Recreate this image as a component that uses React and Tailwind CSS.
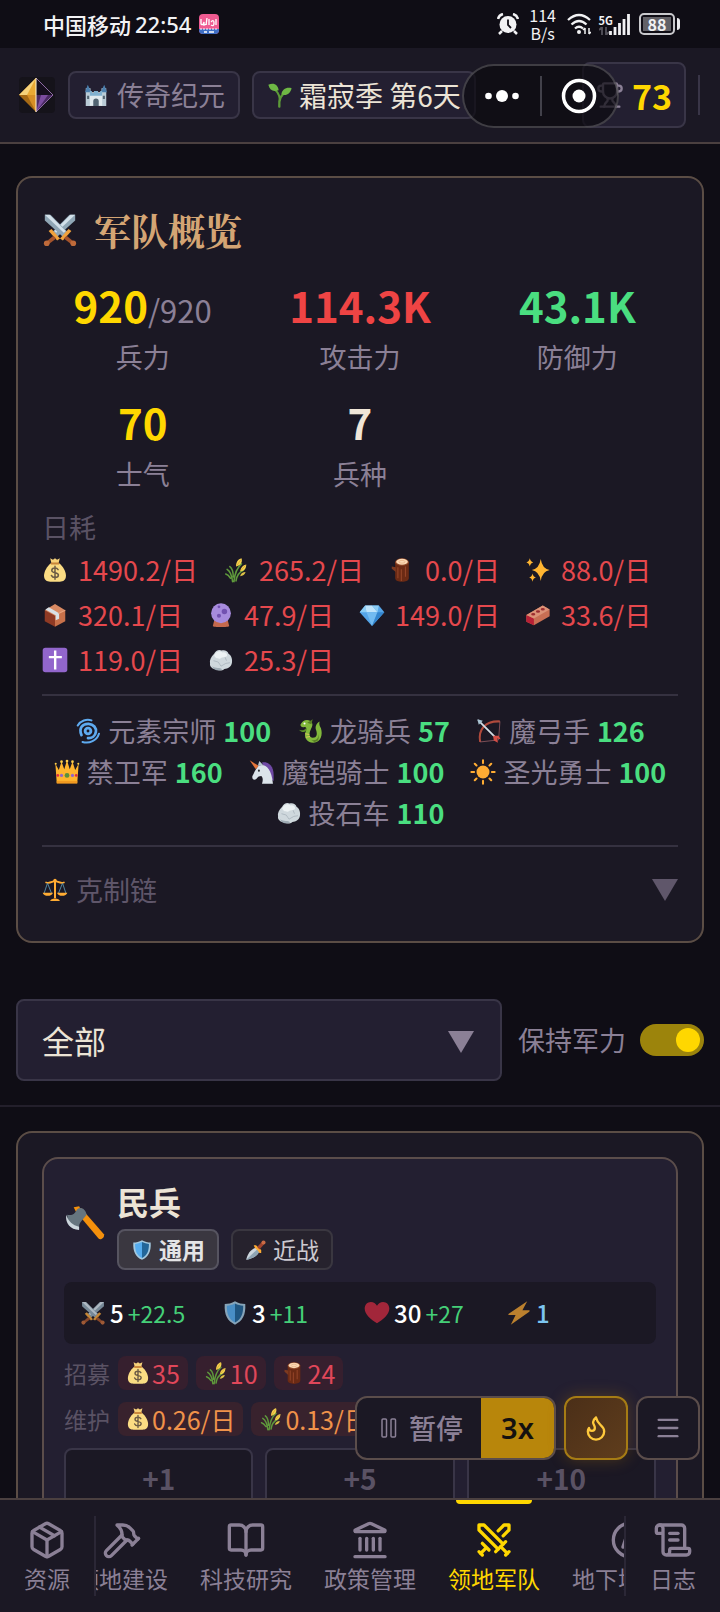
import { useLayoutEffect, useRef } from "react";
import {
  Package, Hammer, BookOpen, Landmark, Swords, Compass, ScrollText,
  Trophy, Flame, Menu,
} from "lucide-react";

const sword = (
  <g>
    <path d="M2 2h6l18 18-5 5L2 8z" fill="#8fa6b5" />
    <path d="M2 2h5l17 17-2 2z" fill="#d3e1ea" />
    <path d="M18 27l9-10 3 2-9 10z" fill="#f0a23c" />
    <path d="M25 24l7 6-2 3-8-6z" fill="#a3532c" />
    <circle cx="32" cy="32" r="3" fill="#bf6a3a" />
  </g>
);

const ART = {
  castle: (
    <g>
      <path d="M3 8h7v26H3zM26 8h7v26h-7z" fill="#b9cbd6" />
      <path d="M9 14h18v20H9z" fill="#dfe9ee" />
      <path d="M2 14L6 3l5 11zM25 14l5-11 4 11z" fill="#4b7fae" />
      <path d="M9 12h3v3h3v-3h6v3h3v-3h3v7H9z" fill="#7fb0cf" />
      <path d="M14 34v-7a4 4 0 0 1 8 0v7z" fill="#526472" />
      <path d="M5 19h3v5H5zM28 19h3v5h-3z" fill="#526472" />
    </g>
  ),
  seedling: (
    <g>
      <path d="M17 35C16 24 19 17 27 14" fill="none" stroke="#5c9a38" strokeWidth="3.5" strokeLinecap="round" />
      <path d="M18 25C17 16 13 11 7 8" fill="none" stroke="#5c9a38" strokeWidth="3" />
      <path d="M1 3c8-4 14 0 15 8C8 14 3 11 1 3z" fill="#6fb845" />
      <path d="M35 8c-8-2-14 2-15 9 7 3 13-1 15-9z" fill="#6fb845" />
    </g>
  ),
  swords: (
    <g>
      <g transform="translate(36 0) scale(-1 1)">{sword}</g>
      {sword}
    </g>
  ),
  money: (
    <g>
      <path d="M11 1l4 2 3-2 3 2 4-2-2 8H13z" fill="#f7d27a" />
      <path d="M12 8h12c6 5 10 12 10 18 0 7-4 9-9 9H11c-5 0-9-2-9-9 0-6 4-13 10-18z" fill="#fbdc83" />
      <path d="M12 7h12v3H12z" fill="#c9863a" />
      <path d="M22.500 17.500c-1-1.800-3-2.300-4.700-2.300-2.500 0-4.500 1.300-4.500 3.400 0 4.600 9.700 2.300 9.700 6.700 0 2.300-2.300 3.600-5 3.600-2.300 0-4.400-.8-5.300-3M18 12.500v19" fill="none" stroke="#6d5c45" strokeWidth="2.200" strokeLinecap="round" />
    </g>
  ),
  wheat: (
    <g>
      <path d="M15 35C16 24 20 14 26 9M13 35C12 26 10 20 5 17M18 34c1-8 5-13 11-16M10 30c-2-3-4-5-7-6M14 28c0-6-1-12-5-15" fill="none" stroke="#5f9a3c" strokeWidth="2.300" strokeLinecap="round" />
      <path d="M18 13c0-6 3-11 8-12 2 5-1 11-8 12zM24 20c1-6 4-9 9-10 0 6-3 10-9 10z" fill="#f6d24f" />
      <path d="M24 27c1-4 4-6 8-6-1 4-4 6-8 6z" fill="#dcc246" />
      <path d="M19 12l6-9M25 19l7-8" stroke="#cf9f2c" />
    </g>
  ),
  wood: (
    <g>
      <path d="M8 6h20v24c0 7-20 7-20 0z" fill="#6b2a14" />
      <path d="M3 13l6 1v7L3 16z" fill="#7d3a20" />
      <path d="M12 14v16M17 17v17M23 13v15" stroke="#97472a" strokeWidth="1.500" />
      <ellipse cx="18" cy="6.500" rx="10" ry="5.500" fill="#8c4526" />
      <ellipse cx="18" cy="6" rx="8.500" ry="4.300" fill="#fbd9b5" />
      <ellipse cx="18" cy="6" rx="4.500" ry="2" fill="none" stroke="#e4ad80" />
    </g>
  ),
  sparkles: (
    <path d="M22 2q2 14 13 16-11 2-13 16-2-14-13-16 11-2 13-16zM6 1q1 5 5 6-4 1-5 6-1-5-5-6 4-1 5-6zM10 23q1 5 5 6-4 1-5 6-1-5-5-6 4-1 5-6z" fill="#ffb531" />
  ),
  box: (
    <g>
      <path d="M3 11l15 7v17L3 27z" fill="#8f3a24" />
      <path d="M33 11l-15 7v17l15-8z" fill="#c8714a" />
      <path d="M18 2l15 9-15 8L3 11z" fill="#d98a63" />
      <path d="M9 6.500l15 9v8l-5 2v-7L4 10z" fill="#d8e0e6" />
      <path d="M23 16l10-5" stroke="#eba57f" strokeWidth="1.500" />
    </g>
  ),
  crystal: (
    <g>
      <path d="M8 26h20l2 8c0 2-24 2-24 0z" fill="#c4694d" />
      <circle cx="18" cy="15.500" r="14.500" fill="#a78bdd" />
      <circle cx="23" cy="13" r="4" fill="#7251b0" />
      <circle cx="15" cy="19" r="3" fill="#7251b0" />
      <circle cx="15" cy="6" r="2" fill="#7251b0" />
    </g>
  ),
  gem: (
    <g>
      <path d="M8 4h20l8 10-18 20L0 14z" fill="#55a5e8" />
      <path d="M8 4l2 10H0z" fill="#8ccdf5" />
      <path d="M8 4h10l-8 10zM18 4l8 10H10z" fill="#bfe4fb" />
      <path d="M18 4h10l-2 10z" fill="#8ccdf5" />
      <path d="M10 14h16l-8 20z" fill="#72bbf1" />
      <path d="M26 14h10L18 34z" fill="#3385ce" />
    </g>
  ),
  brick: (
    <g>
      <path d="M1 18L25 4l10 6v10L12 33 1 28z" fill="#c96f54" />
      <path d="M1 18l11 5v10L1 28z" fill="#b81f35" />
      <path d="M1 18L25 4l10 6-23 13z" fill="#dd9277" />
      <ellipse cx="11" cy="17" rx="3" ry="1.800" fill="#9b2d30" />
      <ellipse cx="18" cy="13" rx="3" ry="1.800" fill="#9b2d30" />
      <ellipse cx="25" cy="9.500" rx="3" ry="1.800" fill="#9b2d30" />
    </g>
  ),
  cross: (
    <g>
      <rect width="36" height="36" rx="4" fill="#9266cc" />
      <path d="M16.500 4h3.500v8h8v3.500h-8V32h-3.500V15.500H9V12h7.500z" fill="#fff" />
    </g>
  ),
  rock: (
    <g>
      <path d="M8 9c2-5 7-7 11-5 5-1 9 1 10 5 4 2 6 8 5 13-1 6-6 9-11 9-3 3-9 3-12 1-6-1-10-5-9-9-1-4 1-9 6-14z" fill="#cfd8dd" />
      <path d="M8 11c3-6 9-7 12-4 5-1 7 2 7 5-4 3-8 1-10 4-4 0-7 0-9-5z" fill="#edf2f4" />
      <path d="M7 19l7 2 4 6 7-4 6-1M24 14l2 5" fill="none" stroke="#a9b5bd" strokeWidth="1.200" />
      <path d="M5 27c5 4 12 1 15 5-5 2-12 2-15-5z" fill="#9eabb4" />
    </g>
  ),
  cyclone: (
    <g fill="none" stroke="#5eaaf0" strokeWidth="4.200" strokeLinecap="round">
      <circle cx="18" cy="18" r="4.200" />
      <path d="M8.500 24C4 14 10 7 19 7.500c7 .5 11.500 6 10.500 12-1 6-6 9.500-11.500 9" strokeWidth="4" />
      <path d="M3 10C7 3 16 0 23 2.500M34 22c-3 10-14 15-24 12" strokeWidth="3" />
    </g>
  ),
  dragon: (
    <g>
      <path d="M4 9C6 3 13 0 18 3c6 4 3 9 1 13-3 6-2 11 3 12 6 0 7-5 5-11-2-5 0-10 5-13-1 4 0 6 2 10 3 9 0 21-11 21-10 0-15-8-11-17 1-4 1-6-2-6-3 1-6 0-6-3z" fill="#82b93c" />
      <path d="M2 16c4 2 8 1 10-2l1 3c-3 4-8 3-11-1z" fill="#5c8f28" />
      <path d="M14 6l8-5-2 7zM20 31c8 2 11-3 10-9 2 7 0 12-6 12z" fill="#587f26" />
      <circle cx="10" cy="7" r="1.500" fill="#fff" />
      <path d="M11 22l6 1M12 27l6-1" stroke="#d8c55a" strokeWidth="1.500" />
    </g>
  ),
  bow: (
    <g fill="none">
      <path d="M5 34C2 16 12 3 34 4" stroke="#b04a3c" strokeWidth="3" />
      <path d="M5 34L32 31L34 4" stroke="#a8666c" strokeWidth="1" />
      <path d="M2 2l25 25" stroke="#d3dfe6" strokeWidth="2.600" />
      <path d="M1 1l8 2-6 6z" fill="#a9c3d2" />
      <path d="M24 25l8 0 3 5-5-1 1 6-6-3z" fill="#d44d45" />
    </g>
  ),
  crown: (
    <g>
      <path d="M1 6l5 9 4-12 4 11 4-13 4 13 4-11 4 12 5-9-2 28H3z" fill="#ffb52e" />
      <circle cx="1.500" cy="6" r="1.500" fill="#ffcf4a" /><circle cx="10" cy="3" r="2" fill="#ffcf4a" />
      <circle cx="18" cy="2" r="2" fill="#ffcf4a" /><circle cx="26" cy="3" r="2" fill="#ffcf4a" />
      <circle cx="34.500" cy="6" r="1.500" fill="#ffcf4a" />
      <path d="M3 31h30v4H3z" fill="#f19a20" />
      <circle cx="18" cy="23" r="3.500" fill="#5c913b" />
      <circle cx="10" cy="23" r="2.300" fill="#9266cc" /><circle cx="26" cy="23" r="2.300" fill="#9266cc" />
      <circle cx="4.500" cy="23" r="2" fill="#dd2e44" /><circle cx="31.500" cy="23" r="2" fill="#dd2e44" />
    </g>
  ),
  unicorn: (
    <g>
      <path d="M18 4c9-2 17 5 17 18v9l-9-8z" fill="#6f49a5" />
      <path d="M13 9c8-4 19 2 21 26H18c2-6 1-9-1-11-3 0-5 1-7 4-4 3-7 0-6-4 2-3 3-8 9-15z" fill="#dbe3ea" />
      <path d="M0 1l13 8-4 5z" fill="#e5763b" />
      <path d="M12 9l2-7 6 6z" fill="#b9c7d2" />
      <circle cx="13.500" cy="16" r="1.500" fill="#292f33" />
    </g>
  ),
  sun: (
    <g>
      <circle cx="18" cy="18" r="9.500" fill="#ffac33" />
      <path d="M18 1v4M18 31v4M1 18h4M31 18h4M6 6l2.500 2.500M27.500 27.500L30 30M6 30l2.500-2.500M27.500 8.500L30 6" stroke="#ffac33" strokeWidth="3" strokeLinecap="round" />
    </g>
  ),
  scales: (
    <g>
      <path d="M5 7c6 2 9-2 13-2s7 4 13 2" fill="none" stroke="#ffac33" strokeWidth="2.500" strokeLinecap="round" />
      <path d="M16.500 3h3v27h-3z" fill="#ffac33" />
      <circle cx="18" cy="4" r="2.500" fill="#ffac33" />
      <path d="M11 34c0-5 14-5 14 0z" fill="#ffac33" />
      <path d="M7 8L2 23M7 8l6 15M29 8l-6 15M29 8l5 15" stroke="#5f9dbb" strokeWidth="1.200" />
      <path d="M0 22h15c-1 6-14 6-15 0zM21 22h15c-1 6-14 6-15 0z" fill="#ffac33" />
    </g>
  ),
  axe: (
    <g>
      <path d="M10 6l5-3 21 24c1 3-3 6-5 4z" fill="#f4900c" />
      <path d="M8 2l5-1 2 4-4 3z" fill="#f4900c" />
      <path d="M2 9c5 1 7-1 9-5 4-3 8 0 9 5l-5 6c-2 2-2 4-2 7C6 21 2 16 2 9z" fill="#66757f" />
      <path d="M1 9c2 6 6 10 12 11v3C5 23 0 17 1 9z" fill="#ccd6dd" />
    </g>
  ),
  shield: (
    <g>
      <path d="M18 1c5 3 10 4 15 4 1 16-4 25-15 30C7 30 2 21 3 5c5 0 10-1 15-4z" fill="#a3c8de" />
      <path d="M18 4c-4 2-8 3-12 3.500C6 20 9 27 18 32z" fill="#55acee" />
      <path d="M18 4c4 2 8 3 12 3.500C30 20 27 27 18 32z" fill="#226699" />
    </g>
  ),
  dagger: (
    <g>
      <path d="M17 14l7 6C20 29 11 33 1 35c2-9 6-17 16-21z" fill="#ccd6dd" />
      <path d="M20 17L1 35c10-2 18-5 23-15z" fill="#8ea4b3" />
      <path d="M14 10l4 0 9 8 0 5-3 0-3-4-5-5z" fill="#ffac33" />
      <path d="M20 13l8-9 4 4-8 9z" fill="#a0442e" />
      <circle cx="31" cy="5" r="3.500" fill="#c96b45" />
    </g>
  ),
  heart: (
    <path d="M36 11.500C36 6 32 2 27 2c-4 0-7 2-9 5.500C16 4 13 2 9 2 4 2 0 6 0 11.500 0 20 9 28 18 33c9-5 18-13 18-21.500z" fill="#c42a40" />
  ),
  bolt: <path d="M30 1L3 19c-1 1-1 2 1 2h9L6 35l27-19c1-1 1-2-1-2h-9z" fill="#e39b31" />,
};

function Emoji({ name, className = "size-[26px]" }) {
  return (
    <svg viewBox="-1 -1 38 38" aria-hidden="true" className={"shrink-0 " + className}>
      {ART[name]}
    </svg>
  );
}

const Triangle = ({ className = "" }) => (
  <svg viewBox="0 0 26 22" aria-hidden="true" className={"h-[22px] w-[26px] shrink-0 " + className}>
    <path d="M0 0h26L13 22z" fill="currentColor" />
  </svg>
);

const STATS = [
  { value: "920", extra: "/920", label: "兵力", color: "text-[#ffd700]" },
  { value: "114.3K", label: "攻击力", color: "text-[#ef4444]" },
  { value: "43.1K", label: "防御力", color: "text-[#4ade80]" },
  { value: "70", label: "士气", color: "text-[#ffd700]" },
  { value: "7", label: "兵种", color: "text-[#f0e6d8]" },
];

const COSTS = [
  ["money", "1490.2/日"], ["wheat", "265.2/日"], ["wood", "0.0/日"], ["sparkles", "88.0/日"],
  ["box", "320.1/日"], ["crystal", "47.9/日"], ["gem", "149.0/日"], ["brick", "33.6/日"],
  ["cross", "119.0/日"], ["rock", "25.3/日"],
];

const UNITS = [
  ["cyclone", "元素宗师", 100], ["dragon", "龙骑兵", 57], ["bow", "魔弓手", 126],
  ["crown", "禁卫军", 160], ["unicorn", "魔铠骑士", 100], ["sun", "圣光勇士", 100],
  ["rock", "投石车", 110],
];

const UNIT_STATS = [
  ["swords", "5", "+22.5"], ["shield", "3", "+11"], ["heart", "30", "+27"], ["bolt", "1", null],
];

const TABS = [
  [Hammer, "领地建设"], [BookOpen, "科技研究"], [Landmark, "政策管理"], [Swords, "领地军队"], [Compass, "地下城探险"],
];

function StatusBar() {
  return (
    <div className="flex h-12 shrink-0 items-center justify-between bg-[#0f0d15] pl-[43px] pr-10 text-[#f2f2f4]">
      <div className="flex items-center gap-1 text-[22px] font-medium">
        <span>中国移动</span>
        <span className="font-['Noto_Sans','Noto_Sans_CJK_SC',sans-serif]">22:54</span>
        <svg viewBox="0 0 20 20" className="ml-1 size-5" aria-hidden="true">
          <rect width="20" height="20" rx="4" fill="#ef5b91" />
          <path d="M0 15h20v1a4 4 0 0 1-4 4H4a4 4 0 0 1-4-4z" fill="#3f6fc4" />
          <path d="M2 5v5q2 2 3-2v3l3-1M8 4l-1 7M10 5v6M12 8q3-3 3 1t-3 2M17 5v6M5 18h3M10 18h5" fill="none" stroke="#fff" strokeWidth="1.300" />
          <path d="M1 15h18" stroke="#fff" strokeDasharray="2 1" />
        </svg>
      </div>
      <div className="flex items-center gap-2">
        <svg viewBox="0 0 22 22" className="size-[22px]" aria-hidden="true">
          <circle cx="11" cy="11.500" r="8.500" fill="#f2f2f4" />
          <path d="M1 6q1-4 5-5M21 6q-1-4-5-5M5 18l-3 3M17 18l3 3" stroke="#f2f2f4" strokeWidth="2.500" fill="none" />
          <path d="M11 6.500v5.500l3 3" stroke="#0f0d15" strokeWidth="1.800" fill="none" />
        </svg>
        <div className="w-8 text-center text-[16px] leading-[18px]">114<br />B/s</div>
        <svg viewBox="0 0 24 22" className="h-[22px] w-6" aria-hidden="true">
          <path d="M1 7Q12-3 23 7M4.500 11.500Q12 4.500 19.500 11.500M8 15.500q4-3.500 8 0" fill="none" stroke="#f2f2f4" strokeWidth="2.300" />
          <circle cx="12" cy="19" r="2" fill="#f2f2f4" />
          <path d="M18 15v6M18 15l-2 2M22 21v-6M22 21l2-2" stroke="#f2f2f4" strokeWidth="1.500" />
        </svg>
        <div className="flex items-end">
          <div className="flex flex-col text-[11px] font-bold leading-[13px]">
            5G
            <svg viewBox="0 0 10 8" className="h-2 w-[10px]" aria-hidden="true">
              <path d="M3 8V0L0 3M7 0v8l3-3" stroke="#55535c" strokeWidth="1.800" fill="none" />
            </svg>
          </div>
          <svg viewBox="0 0 22 21" className="-ml-1 h-[21px] w-[22px]" aria-hidden="true">
            <path d="M1.500 21v-4M6 21v-8M10.500 21V9M15 21V5M19.500 21V0" stroke="#f2f2f4" strokeWidth="2.800" />
          </svg>
        </div>
        <div className="flex items-center gap-[2px]">
          <div className="flex h-[22px] w-9 items-center justify-center rounded-[5px] border-2 border-[#c9c9cd] p-[2px]">
            <span className="w-full bg-[#626167] text-center text-[16px] font-bold leading-[14px]">88</span>
          </div>
          <span className="h-3 w-[3px] rounded-r bg-[#e9e9ec]" />
        </div>
      </div>
    </div>
  );
}

function Header() {
  return (
    <header className="relative flex h-24 shrink-0 items-center justify-between gap-3 overflow-hidden border-b-2 border-[#4b4040] bg-[#1b1824] pl-[18px] pr-5">
      <div className="flex items-center gap-3">
        <svg viewBox="0 0 38 38" className="size-[38px] shrink-0" aria-hidden="true">
          <rect x="1" y="1" width="36" height="36" rx="4" fill="#15131a" />
          <path d="M18 2v17H1z" fill="#e9a933" /><path d="M18 2L9 19H1z" fill="#f6d27a" />
          <path d="M1 19h17v17z" fill="#a66a15" /><path d="M9 19h9v17z" fill="#d78f25" />
          <path d="M18 2l17 17H18z" fill="#160f1e" /><path d="M18 36l17-17H18z" fill="#4a2a63" />
          <path d="M18 36l5-17h7z" fill="#7c4da0" />
          <path d="M18 2l17 17-17 17" fill="none" stroke="#8d6aa3" /><path d="M18 2v34" stroke="#fff3cf" />
        </svg>
        <div className="flex h-12 shrink-0 items-center gap-2 rounded-lg border-2 border-[#393547] bg-[#231f31] px-[13px] text-[27px] text-[#8b8096]">
          <Emoji name="castle" />
          <span>传奇纪元</span>
        </div>
        <div className="flex h-12 shrink-0 items-center gap-[6px] rounded-lg border-2 border-[#393547] bg-[#231f31] px-[13px] text-[28px] text-[#ece4d6]">
          <Emoji name="seedling" />
          <span className="whitespace-nowrap">霜寂季 第6天</span>
        </div>
      </div>
      <div className="flex shrink-0 items-center gap-3">
        <div className="flex h-[66px] items-center gap-2 rounded-lg border-2 border-[#393547] bg-[#231f31] px-3 text-[34px] font-bold text-[#ffd700]">
          <Trophy className="size-7 text-[#8b8096]" strokeWidth={2} />
          <span>73</span>
        </div>
        <span className="h-10 w-[2px] bg-[#393547]" />
      </div>
      <div className="absolute right-[101px] top-4 flex h-16 w-[157px] items-center rounded-full border-2 border-white/20 bg-[#0b0a10]/70">
        <button type="button" aria-label="更多" className="flex flex-1 items-center justify-center">
          <svg viewBox="0 0 34 12" className="h-3 w-[34px]" aria-hidden="true">
            <g fill="#fff"><circle cx="3.500" cy="6" r="3.300" /><circle cx="17" cy="6" r="6" /><circle cx="30.500" cy="6" r="3.300" /></g>
          </svg>
        </button>
        <span className="h-10 w-[2px] bg-[#42414a]" />
        <button type="button" aria-label="关闭" className="flex flex-1 items-center justify-center">
          <svg viewBox="0 0 36 36" className="size-9" aria-hidden="true">
            <circle cx="18" cy="18" r="15.500" fill="none" stroke="#fff" strokeWidth="3.500" />
            <circle cx="18" cy="18" r="6.500" fill="#fff" />
          </svg>
        </button>
      </div>
    </header>
  );
}

function Overview() {
  return (
    <section className="mx-4 rounded-2xl border-2 border-[#5b4d45] bg-[#1b1824] p-6">
      <h2 className="flex items-center gap-4 font-['Noto_Serif_CJK_SC','Noto_Serif_SC','Source_Han_Serif_SC','Noto_Sans_CJK_SC',serif] text-[37px] font-bold leading-[56px] text-[#d4a574]">
        <Emoji name="swords" className="size-[36px]" />
        军队概览
      </h2>
      <div className="mt-4 grid grid-cols-3 gap-x-4 gap-y-[14px] text-center">
        {STATS.map((s) => (
          <div key={s.label}>
            <div className={"flex items-baseline justify-center text-[42px] font-bold leading-[62px] " + s.color}>
              {s.value}
              {s.extra && <span className="text-[31px] font-normal leading-none text-[#8b8096]">{s.extra}</span>}
            </div>
            <div className="text-[27px] leading-[41px] text-[#8b8096]">{s.label}</div>
          </div>
        ))}
      </div>
      <div className="mt-3 text-[27px] leading-[41px] text-[#5a5264]">日耗</div>
      <ul className="flex flex-wrap gap-x-[25px] text-[27px] leading-[45px] text-[#e5484d]">
        {COSTS.map(([icon, text]) => (
          <li key={text} className="flex items-center gap-[10px]">
            <Emoji name={icon} />
            {text}
          </li>
        ))}
      </ul>
      <ul className="mt-3 flex flex-wrap justify-center gap-x-[26px] border-y-2 border-[#353140] pb-3 pt-[14px] text-[27px] leading-[41px] text-[#8b8096]">
        {UNITS.map(([icon, name, count]) => (
          <li key={name} className="flex items-center gap-[7px]">
            <Emoji name={icon} />
            <span>{name}</span>
            <span className="font-bold text-[#4ade80]">{count}</span>
          </li>
        ))}
      </ul>
      <button type="button" className="mt-4 flex w-full items-center justify-between text-[27px] leading-[54px] text-[#5f566a]">
        <span className="flex items-center gap-2">
          <Emoji name="scales" />
          克制链
        </span>
        <Triangle />
      </button>
    </section>
  );
}

function Filters() {
  return (
    <div className="mt-14 flex items-center gap-4 border-b-2 border-[#231f2b] px-4 pb-6">
      <div className="relative min-w-0 flex-1">
        <select aria-label="兵种筛选" className="block h-[82px] w-full appearance-none rounded-lg border-2 border-[#393547] bg-[#231f31] px-6 text-[32px] text-[#ece4d6]">
          <option>全部</option>
        </select>
        <Triangle className="pointer-events-none absolute right-7 top-8 text-[#8b8096]" />
      </div>
      <label className="flex items-center gap-[14px] text-[27px] text-[#8b8096]">
        保持军力
        <input
          type="checkbox"
          role="switch"
          defaultChecked
          className="flex h-8 w-16 appearance-none items-center justify-end rounded-full bg-[#9c840c] px-1 before:size-6 before:rounded-full before:bg-[#ffd700] before:content-['']"
        />
      </label>
    </div>
  );
}

function Chips({ label, items, color }) {
  return (
    <div className="mt-3 flex items-center gap-2 text-[23px] leading-[34px] text-[#5a5264]">
      <span className="shrink-0">{label}</span>
      {items.map(([icon, text]) => (
        <span key={icon} className={"flex shrink-0 items-center gap-[2px] rounded-lg px-2 text-[25px] " + color}>
          <Emoji name={icon} className="size-6" />
          {text}
        </span>
      ))}
    </div>
  );
}

function UnitCard() {
  return (
    <section className="mx-4 mt-6 rounded-2xl border-2 border-[#5b4d45] bg-[#1b1824] p-6">
      <article className="rounded-2xl border-2 border-[#5b4d4b] bg-[#231f31] p-5">
        <div className="flex items-center gap-3">
          <Emoji name="axe" className="size-[41px]" />
          <div>
            <h3 className="text-[32px] font-bold leading-[44px] text-[#ece4d6]">民兵</h3>
            <div className="mt-[6px] flex gap-3 text-[23px]">
              <span className="flex h-[41px] items-center gap-[6px] rounded-lg border-2 border-[#565460] bg-[#3a3740] px-3 font-bold text-[#e4e4e6]">
                <Emoji name="shield" className="size-[22px]" />通用
              </span>
              <span className="flex h-[41px] items-center gap-[6px] rounded-lg border-2 border-[#3a3740] bg-[#26222d] px-3 text-[#ccc9d0]">
                <Emoji name="dagger" className="size-[22px]" />近战
              </span>
            </div>
          </div>
        </div>
        <div className="mt-3 grid h-[62px] grid-cols-4 items-center gap-2 rounded-lg bg-[#1b1824] px-4">
          {UNIT_STATS.map(([icon, value, bonus]) => (
            <div key={icon} className="flex items-center gap-1 whitespace-nowrap text-[24px]">
              <Emoji name={icon} className="size-[26px] opacity-80" />
              <span className={bonus ? "font-medium text-white" : "font-medium text-[#7cc4f0]"}>{value}</span>
              {bonus && <span className="text-[23px] text-[#45cf78]">{bonus}</span>}
            </div>
          ))}
        </div>
        <Chips label="招募" color="bg-[#361f2e] text-[#e0475a]" items={[["money", "35"], ["wheat", "10"], ["wood", "24"]]} />
        <Chips label="维护" color="bg-[#38222d] text-[#f0924a]" items={[["money", "0.26/日"], ["wheat", "0.13/日"]]} />
        <div className="mt-3 grid grid-cols-3 gap-3">
          {["+1", "+5", "+10"].map((t) => (
            <button key={t} type="button" className="h-[60px] rounded-lg border-2 border-[#393547] bg-[#1b1824] text-[28px] font-bold text-[#5a5264]">
              {t}
            </button>
          ))}
        </div>
      </article>
    </section>
  );
}

function FloatingControls() {
  return (
    <div className="absolute bottom-[38px] right-5 flex h-16 gap-2">
      <div className="flex overflow-hidden rounded-xl border-2 border-[#5b4d4b] bg-[#1b1824]">
        <button type="button" className="flex items-center gap-3 pl-6 pr-[18px] text-[27px] font-medium text-[#8b8096]">
          <svg viewBox="0 0 16 20" className="h-5 w-4" aria-hidden="true">
            <g fill="none" stroke="currentColor" strokeWidth="1.500"><rect x="1" y="1" width="4.500" height="18" rx="1" /><rect x="10" y="1" width="4.500" height="18" rx="1" /></g>
          </svg>
          暂停
        </button>
        <button type="button" className="w-[73px] bg-[#b8860b] font-['Noto_Sans','Noto_Sans_CJK_SC',sans-serif] text-[29px] font-semibold text-[#14110f]">3x</button>
      </div>
      <button type="button" aria-label="加速" className="flex size-16 items-center justify-center rounded-xl border-2 border-[#a67c14] bg-linear-to-br from-[#4b2f18] to-[#5f3d1c] text-[#ffc93c] shadow-[0_0_16px_rgba(184,120,11,0.3)]">
        <Flame className="size-7" />
      </button>
      <button type="button" aria-label="菜单" className="flex size-16 items-center justify-center rounded-xl border-2 border-[#5b4d4b] bg-[#1b1824] text-[#8b8096]">
        <Menu className="size-7" />
      </button>
    </div>
  );
}

function TabButton({ icon: Icon, label, active, className = "" }) {
  return (
    <button
      type="button"
      className={"relative flex shrink-0 flex-col items-center whitespace-nowrap pt-5 " + (active ? "text-[#ffd700] " : "text-[#8b8096] ") + className}
    >
      {active && <span className="absolute top-0 h-1 w-[76px] rounded-b bg-[#ffd700]" />}
      <Icon className="size-10" strokeWidth={2} />
      <span className="text-[23px] leading-[36px]">{label}</span>
    </button>
  );
}

function BottomNav() {
  const strip = useRef(null);
  useLayoutEffect(() => {
    strip.current.scrollLeft = 36;
  }, []);
  return (
    <nav className="flex h-[114px] shrink-0 border-t-2 border-[#4b4040] bg-[#1b1824]">
      <TabButton icon={Package} label="资源" className="w-[94px]" />
      <span className="my-4 w-[2px] bg-[#2b2736]" />
      <div ref={strip} className="flex min-w-0 flex-1 overflow-x-auto [scrollbar-width:none]">
        {TABS.map(([icon, label]) => (
          <TabButton key={label} icon={icon} label={label} active={label === "领地军队"} className="px-4" />
        ))}
      </div>
      <span className="my-4 w-[2px] bg-[#2b2736]" />
      <TabButton icon={ScrollText} label="日志" className="w-[94px]" />
    </nav>
  );
}

export default function App() {
  return (
    <div className="flex h-screen flex-col bg-[#0f0d15] font-['Noto_Sans_CJK_SC',sans-serif]" lang="zh-CN">
      <StatusBar />
      <Header />
      <div className="relative flex min-h-0 flex-1 flex-col">
        <main className="min-h-0 flex-1 overflow-y-auto pb-16 pt-8 [scrollbar-width:none]">
          <Overview />
          <Filters />
          <UnitCard />
        </main>
        <FloatingControls />
      </div>
      <BottomNav />
    </div>
  );
}
